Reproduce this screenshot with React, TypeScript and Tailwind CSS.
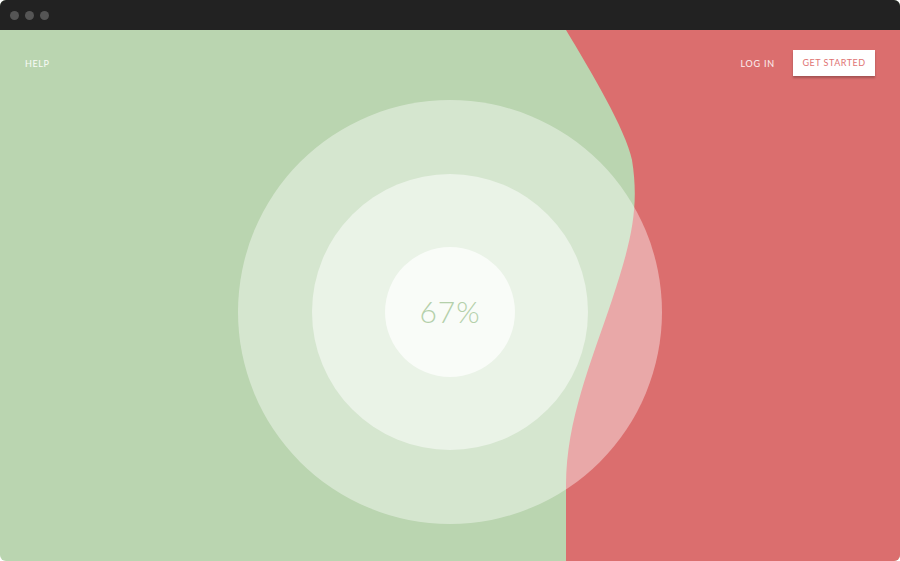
import React from "react";

export default function App() {
  return (
    <div className="w-[900px] h-[561px] bg-white">
      <div className="w-[900px] h-[561px] rounded-[6px] overflow-hidden flex flex-col bg-[#bad5b0]">
        <div className="h-[30px] bg-[#222222] flex items-center gap-[6px] pl-[10px] shrink-0">
          <span className="w-[9px] h-[9px] rounded-full bg-[#555555]" />
          <span className="w-[9px] h-[9px] rounded-full bg-[#555555]" />
          <span className="w-[9px] h-[9px] rounded-full bg-[#555555]" />
        </div>
        <div className="relative flex-1">
          <svg className="absolute inset-0" width="900" height="531" viewBox="0 0 900 531">
            <path
              d="M566,0 C590,40 626,100 632,130 C640,180 630,215 612,270 C592,330 566,390 566,455 L566,531 L900,531 L900,0 Z"
              fill="#db6e6e"
            />
          </svg>
          <div className="absolute left-[238px] top-[70px] w-[424px] h-[424px] rounded-full bg-white/40 flex items-center justify-center">
            <div className="w-[276px] h-[276px] rounded-full bg-white/50 flex items-center justify-center">
              <div className="w-[130px] h-[130px] rounded-full bg-white/70 flex items-center justify-center">
                <span
                  className="text-[30px] text-[#b4d0aa] font-light tracking-[1px] -mt-[2px]"
                  style={{ fontFamily: "Lato, 'Open Sans', sans-serif" }}
                >
                  67%
                </span>
              </div>
            </div>
          </div>
          <div
            className="relative flex items-center justify-between pl-[25px] pr-[25px] pt-[20px]"
            style={{ fontFamily: "Lato, 'Open Sans', sans-serif" }}
          >
            <span className="text-[9px] tracking-[0.6px] text-white/90 mt-[2px]">HELP</span>
            <div className="flex items-center gap-[18px]">
              <span className="text-[9px] tracking-[0.8px] text-white/90 mt-[2px]">LOG IN</span>
              <button className="w-[82px] h-[26px] bg-white text-[#e07373] text-[9px] tracking-[0.5px] shadow-[0_2px_2px_rgba(0,0,0,0.25)] flex items-center justify-center">
                GET STARTED
              </button>
            </div>
          </div>
        </div>
      </div>
    </div>
  );
}
